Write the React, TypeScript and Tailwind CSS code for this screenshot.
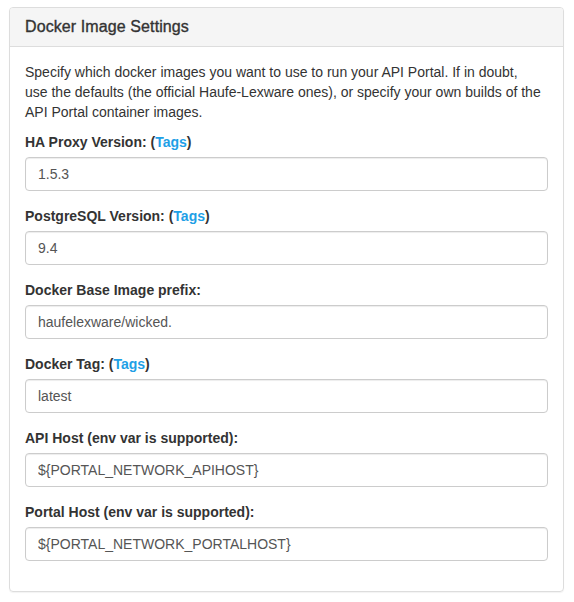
import React from "react";

const fields: { label: string; tags?: boolean; value: string }[] = [
  { label: "HA Proxy Version:", tags: true, value: "1.5.3" },
  { label: "PostgreSQL Version:", tags: true, value: "9.4" },
  { label: "Docker Base Image prefix:", value: "haufelexware/wicked." },
  { label: "Docker Tag:", tags: true, value: "latest" },
  { label: "API Host (env var is supported):", value: "${PORTAL_NETWORK_APIHOST}" },
  { label: "Portal Host (env var is supported):", value: "${PORTAL_NETWORK_PORTALHOST}" },
];

export default function App() {
  return (
    <div
      className="bg-white min-h-[602px] pt-[7px] pl-[9px] text-[#333] text-[14px] leading-[20px]"
      style={{ fontFamily: '"Liberation Sans", Arial, sans-serif' }}
    >
      <div className="w-[555px] border border-[#ddd] rounded-[4px] shadow-[0_1px_1px_rgba(0,0,0,0.05)]">
        <div className="bg-[#f5f5f5] border-b border-[#ddd] rounded-t-[3px] px-[15px] py-[10px]">
          <h3 className="text-[16px] leading-[17.6px] text-[#333] m-0 tracking-[0.1px] [-webkit-text-stroke:0.35px_#333]">
            Docker Image Settings
          </h3>
        </div>
        <div className="p-[15px]">
          <p className="mb-[10px] whitespace-nowrap">
            <span className="block">Specify which docker images you want to use to run your API Portal. If in doubt,</span>
            <span className="block">use the defaults (the official Haufe-Lexware ones), or specify your own builds of the</span>
            <span className="block">API Portal container images.</span>
          </p>
          {fields.map((f, i) => (
            <div key={i} className="mb-[15px]">
              <label className="block font-bold mb-[5px]">
                {f.label}
                {f.tags && (
                  <>
                    {" "}(<a className="text-[#1ea0e6]">Tags</a>)
                  </>
                )}
              </label>
              <input
                readOnly
                value={f.value}
                className="block w-full h-[34px] px-[12px] py-[6px] text-[14px] leading-[20px] text-[#555] bg-white border border-[#ccc] rounded-[4px] shadow-[inset_0_1px_1px_rgba(0,0,0,0.075)] outline-none"
                style={{ fontFamily: '"Liberation Sans", Arial, sans-serif' }}
              />
            </div>
          ))}
        </div>
      </div>
    </div>
  );
}
